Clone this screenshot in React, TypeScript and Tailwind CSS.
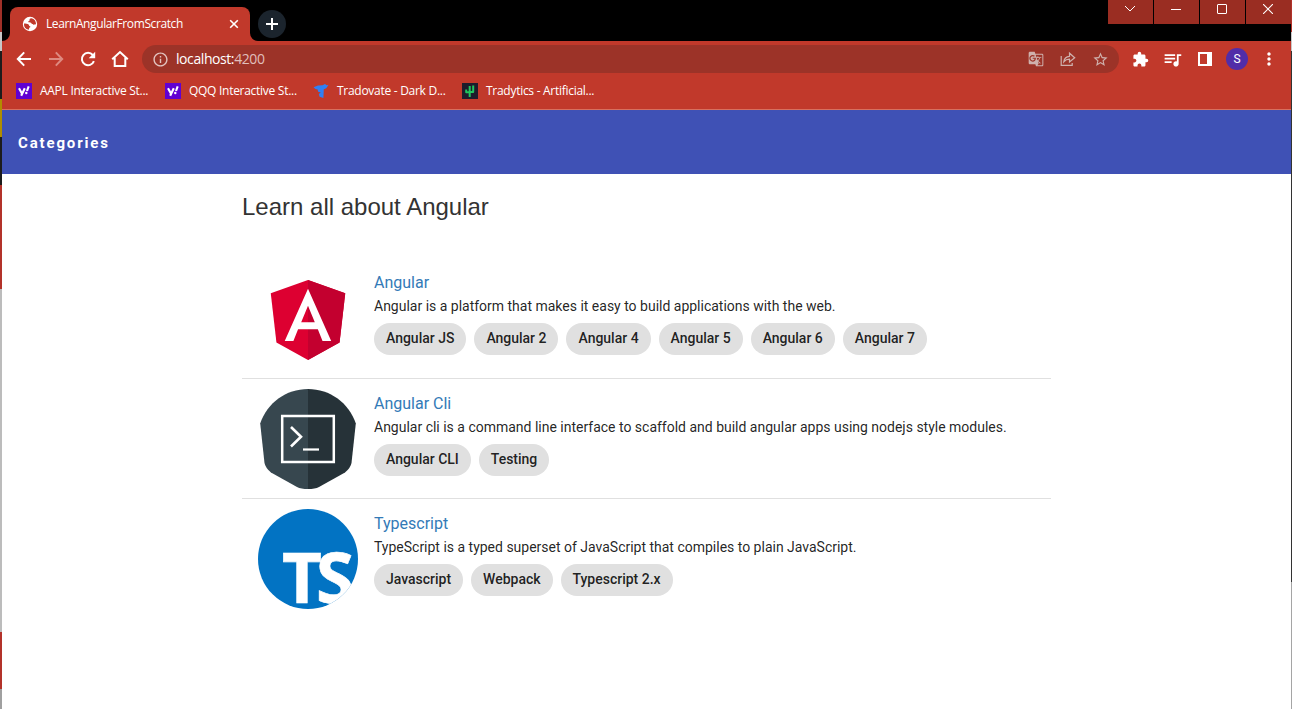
import React from "react";
import {
  MdExtension,
  MdGTranslate,
  MdMoreVert,
  MdOutlineInfo,
  MdQueueMusic,
  MdStarBorder,
} from "react-icons/md";

const ui = "font-['Open_Sans','Noto_Sans',sans-serif]";

function StrokeIcon({ d, size = 20, className = "" }: { d: string; size?: number; className?: string }) {
  return (
    <svg width={size} height={size} viewBox={`0 0 ${size} ${size}`} className={className} fill="none" stroke="currentColor" strokeWidth="2">
      <path d={d} />
    </svg>
  );
}

function GlobeIcon() {
  return (
    <svg width="16" height="16" viewBox="0 0 16 16" className="shrink-0">
      <circle cx="8" cy="8" r="7.200" fill="#fff" />
      <path
        d="M9.500 2.200C7.500 2.400 7.200 3.600 7.800 4.300 6.800 5 6 5.300 6.300 6.300c1.200.2 2.700 0 3.300 1.200.5 1.200 1.600 1.300 2.900 1.100.6-.1 1.200-.4 1.500-.7A6 6 0 0 0 9.500 2.200z"
        fill="#c1392b"
      />
      <path
        d="M2 7.500c1.500.1 3.600 0 4.600 1 .6.700.3 1.500 1.300 1.700.8.200.6 1-.2 1.300-.7.300-.6 1.400-.9 2.300A6 6 0 0 1 2 7.500z"
        fill="#c1392b"
      />
    </svg>
  );
}

function YahooIcon() {
  return (
    <svg width="16" height="16" viewBox="0 0 16 16">
      <rect width="16" height="16" fill="#6001d2" />
      <path d="M3 5.2 5.8 10.3M8.800 5.2 5.200 12.800" stroke="#fff" strokeWidth="2.100" fill="none" />
      <path d="M12.700 3.300 11 8" stroke="#fff" strokeWidth="2.100" fill="none" />
      <circle cx="10.300" cy="10" r="1.200" fill="#fff" />
    </svg>
  );
}

function TradovateIcon() {
  return (
    <svg width="16" height="16" viewBox="0 0 16 16">
      <path d="M0.500 4.300 5 2.600 9.500 2.300 12 1l1.500 1.200L15.400 2 13.300 5.200 10.800 6.200 10.400 15 6.600 13.800 5.800 11 7.800 9.500 5.200 8.800 4.600 6.600 2.500 6z" fill="#2f80f5" />
    </svg>
  );
}

function TradyticsIcon() {
  return (
    <svg width="16" height="16" viewBox="0 0 16 16">
      <rect width="16" height="16" fill="#1c1c2c" />
      <path d="M7.700 3v11M4.200 6.500v2.800H8M11.200 2.500v6.500H8" stroke="#22c55e" strokeWidth="2" fill="none" strokeLinejoin="round" />
    </svg>
  );
}

const bookmarks = [
  { label: "AAPL Interactive St...", width: "w-[149px]", icon: <YahooIcon /> },
  { label: "QQQ Interactive St...", width: "w-[148px]", icon: <YahooIcon /> },
  { label: "Tradovate - Dark D...", width: "w-[149px]", icon: <TradovateIcon /> },
  { label: "Tradytics - Artificial...", width: "w-[149px]", icon: <TradyticsIcon /> },
];

function TabStrip() {
  return (
    <div className="flex h-[41px] bg-black">
      <div className="flex h-full items-end">
        <svg width="8" height="8" viewBox="0 0 8 8"><path d="M8 0v8H0a8 8 0 0 0 8-8z" fill="#c1392b" /></svg>
      </div>
      <div className="mt-[7px] flex h-[34px] w-[240px] items-center rounded-t-lg bg-[#c1392b] pl-[12px] pr-[9px] text-white">
        <GlobeIcon />
        <span className={`ml-[8px] flex-1 whitespace-nowrap text-[12px] tracking-[-0.4px] ${ui}`}>LearnAngularFromScratch</span>
        <svg width="14" height="14" viewBox="0 0 14 14" fill="none" stroke="currentColor" strokeWidth="1.600"><path d="M3.200 3.200l7.600 7.600M10.800 3.200 3.200 10.800" /></svg>
      </div>
      <div className="flex h-full items-end">
        <svg width="8" height="8" viewBox="0 0 8 8"><path d="M0 0v8h8a8 8 0 0 1-8-8z" fill="#c1392b" /></svg>
      </div>
      <div className="mt-[10px] flex size-7 items-center justify-center rounded-full bg-[#1b242d] text-white">
        <StrokeIcon d="M4 10h12M10 4v12" />
      </div>
      <div className="ml-auto flex h-6 gap-px text-white">
        <div className="flex w-[45px] justify-center bg-[#9a2d22] pr-[2px] pt-[5px]">
          <svg width="10" height="8" viewBox="0 0 10 8" fill="none" stroke="currentColor"><path d="M0 1 5 6l5-5" /></svg>
        </div>
        <div className="flex w-[45px] justify-center bg-[#9a2d22] pr-[2px] pt-[9px]"><div className="h-px w-[10px] bg-white" /></div>
        <div className="flex w-[45px] justify-center bg-[#9a2d22] pr-[2px] pt-[4px]"><div className="size-[10px] rounded-[1px] border border-white" /></div>
        <div className="flex w-[45px] justify-center bg-[#9a2d22] pr-[2px] pt-[4px]">
          <svg width="10" height="10" viewBox="0 0 10 10" fill="none" stroke="currentColor" strokeWidth="1.100"><path d="M0 0 10 10M10 0 0 10" /></svg>
        </div>
      </div>
    </div>
  );
}

function Toolbar() {
  return (
    <div className="flex h-9 items-center bg-[#c1392b] pl-3 pr-[12px] text-white">
      <StrokeIcon d="M17 10H4M10.200 3.400 3.800 10l6.400 6.600" />
      <StrokeIcon d="M3 10h13M9.800 3.400 16.200 10l-6.400 6.600" className="ml-[12px] text-[#de8a80]" />
      <svg width="20" height="20" viewBox="0 0 20 20" className="ml-[12px]" fill="none" stroke="currentColor" strokeWidth="2">
        <path d="M15.900 12.200A6.200 6.200 0 1 1 14.800 6" />
        <path d="M17.200 2.700v6.500h-6.500z" fill="currentColor" stroke="none" />
      </svg>
      <StrokeIcon d="M2.200 10.300 10 3l7.800 7.300M4.700 8.800V17h10.600V8.800" className="ml-[12px]" />
      <div className="ml-[12px] flex h-7 w-[977px] items-center rounded-full bg-[#9c3328] pl-[10px] pr-[10px]">
        <MdOutlineInfo size={17} className="text-[#e3c4c0]" />
        <span className={`ml-[7px] pb-px text-[14px] tracking-[-0.42px] ${ui}`}>
          localhost:<span className="text-[#e0bfbb]">4200</span>
        </span>
        <div className="ml-auto flex items-center gap-4 text-[#cfb1ad]">
          <MdGTranslate size={16} />
          <svg width="16" height="16" viewBox="0 0 16 16" fill="none" stroke="currentColor" strokeWidth="1.200">
            <path d="M1.200 5v9.400h11V12" />
            <path d="M3.800 10.800C4.200 7 6.500 5.500 9.500 5.300V2.200l5.200 4.600-5.200 4.200V8.200C7 8.200 5.300 9 3.800 10.800z" />
          </svg>
          <MdStarBorder size={17} />
        </div>
      </div>
      <MdExtension size={17} className="ml-[13px]" />
      <MdQueueMusic size={21} className="ml-[13px]" />
      <svg width="14" height="14" viewBox="0 0 14 14" className="ml-[15px]"><path fillRule="evenodd" d="M0 0h14v14H0zM2 2v10h7V2z" fill="#fff" /></svg>
      <div className="ml-[14px] flex size-[22px] items-center justify-center rounded-full bg-[#512da8] font-['Roboto',sans-serif] text-[12px]">S</div>
      <MdMoreVert size={20} className="ml-auto" />
    </div>
  );
}

function BookmarksBar() {
  return (
    <div className="flex h-[33px] border-b border-[#d8705f] bg-[#c1392b] pl-[14px] text-white">
      {bookmarks.map((b) => (
        <div key={b.label} className={`flex h-7 items-center ${b.width}`}>
          {b.icon}
          <span className={`ml-[8px] whitespace-nowrap text-[12px] tracking-[-0.28px] ${ui}`}>{b.label}</span>
        </div>
      ))}
    </div>
  );
}

function AngularLogo() {
  return (
    <svg width="100" height="100" viewBox="0 0 250 250">
      <path fill="#dd0031" d="M125 30 31.900 63.200l14.200 123.100L125 230l78.900-43.700 14.200-123.100z" />
      <path fill="#c3002f" d="M125 30v200l78.900-43.700 14.200-123.100z" />
      <path fill="#fff" d="M125 52.100 66.800 182.600h21.700l11.700-29.200h49.400l11.700 29.200H183zm17 83.300h-34l17-40.900z" />
    </svg>
  );
}

function CliLogo() {
  return (
    <svg width="100" height="100" viewBox="0 0 100 100">
      <path fill="#37474f" d="M50 0C28 0 9 14 2.200 34.500L6.500 74Q7.500 79 13 83.500L39 98Q43 100 50 100z" />
      <path fill="#263238" d="M50 0c22 0 41 14 47.800 34.500L93.500 74Q92.500 79 87 83.500L61 98Q57 100 50 100z" />
      <rect x="24.200" y="27" width="51.600" height="46" fill="none" stroke="#fff" strokeWidth="2.500" />
      <path d="M33 38 43 47.800 33 57.500" fill="none" stroke="#fff" strokeWidth="2.600" />
      <path d="M45 60.500h16" stroke="#fff" strokeWidth="2.200" />
    </svg>
  );
}

function TypescriptLogo() {
  return (
    <svg width="100" height="100" viewBox="0 0 100 100" className="rounded-full bg-[#0273c3]">
      <text x="24" y="93.500" fill="#fff" stroke="#fff" strokeWidth="0.600" fontFamily="Open Sans" fontWeight="700" fontSize="69" textLength="72" lengthAdjust="spacing">TS</text>
    </svg>
  );
}

const topics = [
  {
    title: "Angular",
    text: "Angular is a platform that makes it easy to build applications with the web.",
    tags: ["Angular JS", "Angular 2", "Angular 4", "Angular 5", "Angular 6", "Angular 7"],
    logo: <AngularLogo />,
    box: "h-[121px] border-b",
  },
  {
    title: "Angular Cli",
    text: "Angular cli is a command line interface to scaffold and build angular apps using nodejs style modules.",
    tags: ["Angular CLI", "Testing"],
    logo: <CliLogo />,
    box: "h-[120px] border-b",
  },
  {
    title: "Typescript",
    text: "TypeScript is a typed superset of JavaScript that compiles to plain JavaScript.",
    tags: ["Javascript", "Webpack", "Typescript 2.x"],
    logo: <TypescriptLogo />,
    box: "h-[120px]",
  },
];

function Page() {
  return (
    <div className="flex-1 bg-white font-['Roboto',sans-serif]">
      <header className="flex h-16 items-center bg-[#3f51b5] px-4 text-[15px] font-bold tracking-[1.850px] text-white">
        <span className="pt-[2px]">Categories</span>
      </header>
      <main className="ml-[240px] w-[809px]">
        <h1 className="h-[84px] pt-[19px] font-['Liberation_Sans',sans-serif] text-[24px] leading-[28px] text-[#333]">Learn all about Angular</h1>
        {topics.map((t) => (
          <section key={t.title} className={`flex border-[#e0e0e0] pl-4 pt-[10px] ${t.box}`}>
            <div className="size-[100px] shrink-0">{t.logo}</div>
            <div className="ml-4 pt-[3px]">
              <h2 className="text-[16px] leading-6 text-[#337ab7]">{t.title}</h2>
              <p className="whitespace-nowrap text-[14px] leading-[23px] tracking-[-0.006px] text-black/87">{t.text}</p>
              <div className="mt-[5px] flex gap-2">
                {t.tags.map((tag) => (
                  <span key={tag} className="flex h-8 items-center rounded-full bg-[#e0e0e0] px-3 pb-[2px] text-[14px] font-medium tracking-[-0.010px] text-black/87">{tag}</span>
                ))}
              </div>
            </div>
          </section>
        ))}
      </main>
    </div>
  );
}

export default function App() {
  return (
    <div className="flex h-[709px] w-[1292px] overflow-hidden">
      <div className="flex w-[2px] flex-col">
        <div className="h-8 bg-[#a03028]" />
        <div className="h-[19px] bg-[#c8c8c8]" />
        <div className="h-[48px] bg-[#1c1c1c]" />
        <div className="h-[38px] bg-[#b08d00]" />
        <div className="h-[48px] bg-[#1c1c1c]" />
        <div className="h-[104px] bg-[#b3322a]" />
        <div className="h-[343px] bg-[#bcbcbc]" />
        <div className="h-[57px] bg-[#b3322a]" />
        <div className="flex-1 bg-[#a0a0a0]" />
      </div>
      <div className="flex w-[1289px] flex-col">
        <TabStrip />
        <Toolbar />
        <BookmarksBar />
        <Page />
      </div>
      <div className="flex w-px flex-col">
        <div className="h-8 bg-[#b3322a]" />
        <div className="h-[19px] bg-[#c8c8c8]" />
        <div className="h-[531px] bg-[#333]" />
        <div className="flex-1 bg-[#a5a5a5]" />
      </div>
    </div>
  );
}
